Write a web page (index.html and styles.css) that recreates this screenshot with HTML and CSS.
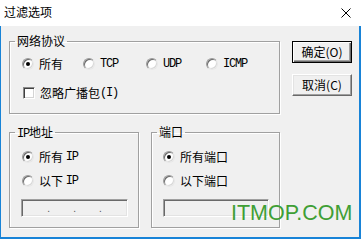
FILE: index.html
```html
<!DOCTYPE html>
<html lang="zh">
<head>
<meta charset="utf-8">
<title>过滤选项</title>
<link rel="stylesheet" href="styles.css">
</head>
<body>
<div class="titlebar">
  <span class="title">过滤选项</span>
  <svg class="close" width="10" height="10" viewBox="0 0 10 10"><path d="M0.5 0.5 L9.5 9.5 M9.5 0.5 L0.5 9.5" stroke="#000" stroke-width="1" fill="none"/></svg>
</div>
<div class="client">
  <div class="left">
    <fieldset class="group g1">
      <legend>网络协议</legend>
      <div class="proto">
        <div class="opt"><span class="radio on"></span>所有</div>
        <div class="opt"><span class="radio"></span><span class="lat">TCP</span></div>
        <div class="opt"><span class="radio"></span><span class="lat">UDP</span></div>
        <div class="opt"><span class="radio"></span><span class="lat">ICMP</span></div>
      </div>
      <div class="opt checkrow"><span class="check"></span>忽略广播包<span class="lat">(I)</span></div>
    </fieldset>
    <div class="lower">
      <fieldset class="group g2">
        <legend><span class="lat">IP</span>地址</legend>
        <div class="opt"><span class="radio on"></span>所有 <span class="lat">IP</span></div>
        <div class="opt gap"><span class="radio"></span>以下 <span class="lat">IP</span></div>
        <div class="field ip"><span class="seg"></span><span class="dot">.</span><span class="seg"></span><span class="dot">.</span><span class="seg"></span><span class="dot">.</span><span class="seg"></span></div>
      </fieldset>
      <fieldset class="group g3">
        <legend>端口</legend>
        <div class="opt"><span class="radio on"></span>所有端口</div>
        <div class="opt gap"><span class="radio"></span>以下端口</div>
        <div class="field port"></div>
      </fieldset>
    </div>
  </div>
  <div class="buttons">
    <button class="btn default">确定(O)</button>
    <button class="btn">取消(C)</button>
  </div>
  <div class="watermark">ITMOP.COM</div>
</div>
</body>
</html>
```

FILE: styles.css
```css
* { box-sizing: border-box; }
html, body { margin: 0; padding: 0; }
body {
  width: 361px;
  height: 239px;
  overflow: hidden;
  background: #f0f0f0;
  font-family: "Noto Sans CJK SC", "Noto Sans", sans-serif;
  font-size: 12px;
  color: #000;
}
.titlebar {
  height: 26px;
  background: #fff;
  display: flex;
  align-items: center;
  justify-content: space-between;
  padding: 0 10px 0 4px;
}
.title {
  font-size: 12px;
  line-height: 14px;
  margin-top: -2px;
}
.close { display: block; }
.client {
  position: relative;
  height: 213px;
  background: #f0f0f0;
  border-left: 1px solid #1883d7;
  border-right: 2px solid #1883d7;
  border-bottom: 2px solid #1883d7;
  display: flex;
  align-items: flex-start;
  padding: 8px 0 0 8px;
}
.left {
  width: 271px;
  display: flex;
  flex-direction: column;
}
.group {
  margin: 0;
  padding: 0;
  border: 1px solid #a0a0a0;
  box-shadow: inset 1px 1px 0 #fff, 1px 1px 0 #fff;
  min-width: 0;
}
.group legend {
  padding: 0 2px;
  margin-left: 5px;
  font-size: 12px;
  line-height: 14px;
  height: 14px;
}
.lat {
  font-family: "Liberation Mono", monospace;
  font-size: 12px;
  letter-spacing: -1.2px;
}
.opt {
  display: flex;
  align-items: center;
  height: 16px;
  line-height: 16px;
  white-space: pre;
}
.radio {
  width: 12px;
  height: 12px;
  border-radius: 50%;
  background: #fff;
  border: 1px solid;
  border-color: #9a9a9a #e6e6e6 #e6e6e6 #9a9a9a;
  box-shadow: inset 1px 1px 0 #6a6a6a, inset -1px -1px 0 #d8d8d8;
  margin-right: 5px;
  flex: none;
  display: flex;
  align-items: center;
  justify-content: center;
}
.radio.on::after {
  content: "";
  width: 4px;
  height: 4px;
  border-radius: 50%;
  background: #000;
}
.check {
  width: 12px;
  height: 12px;
  background: #fff;
  border: 1px solid;
  border-color: #8a8a8a #fff #fff #8a8a8a;
  box-shadow: inset 1px 1px 0 #404040, inset -1px -1px 0 #d4d4d4;
  margin-right: 5px;
  flex: none;
}
.g1 {
  width: 271px;
  padding: 8px 0 12px 0;
}
.proto {
  display: grid;
  grid-template-columns: 61px 63px 60px auto;
  padding-left: 12px;
}
.checkrow {
  margin-top: 13px;
  padding-left: 13px;
}
.lower {
  display: flex;
  gap: 12px;
  margin-top: 11px;
}
.g2, .g3 {
  padding: 10px 0 10px 0;
}
.g2 { width: 130px; }
.g3 { width: 129px; }
.g2 .opt { margin-left: 12px; }
.g3 .opt { margin-left: 11px; }
.gap { margin-top: 8px; }
.field {
  margin-top: 10px;
  margin-left: 11px;
  height: 18px;
  background: #f0f0f0;
  border: 1px solid;
  border-color: #a0a0a0 #fff #fff #a0a0a0;
  box-shadow: inset 1px 1px 0 #696969, inset -1px -1px 0 #e3e3e3;
}
.field.ip {
  width: 107px;
  display: flex;
  align-items: flex-end;
  padding: 0 2px 2px 2px;
}
.field.port { width: 106px; }
.seg { flex: 1; }
.dot {
  font-family: "Liberation Sans", sans-serif;
  font-size: 10px;
  line-height: 10px;
  color: #555;
}
.buttons {
  margin-left: 12px;
  margin-top: 7px;
  display: flex;
  flex-direction: column;
  gap: 11px;
}
.btn {
  width: 60px;
  height: 22px;
  padding: 0;
  margin: 0;
  font-family: "Noto Sans CJK SC", "Noto Sans", sans-serif;
  font-size: 12px;
  line-height: 14px;
  color: #000;
  background: #f0f0f0;
  border: 1px solid;
  border-color: #fff #696969 #696969 #fff;
  box-shadow: inset -1px -1px 0 #a0a0a0, inset 1px 1px 0 #e3e3e3;
}
.btn.default {
  border: 1px solid #000;
  box-shadow: inset 1px 1px 0 #fff, inset -1px -1px 0 #696969, inset -2px -2px 0 #a0a0a0;
}
.watermark {
  position: absolute;
  left: 230px;
  top: 177px;
  font-family: "Liberation Sans", Arial, sans-serif;
  font-size: 21.5px;
  line-height: 21.5px;
  color: #3f9f35;
  white-space: nowrap;
}
```
